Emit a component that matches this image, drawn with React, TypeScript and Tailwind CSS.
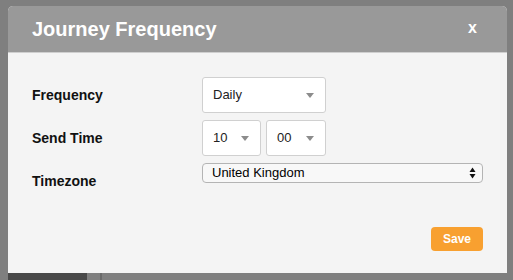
const Caret = () => (
  <span className="w-0 h-0 border-l-[4px] border-r-[4px] border-t-[5px] border-l-transparent border-r-transparent border-t-[#8c8c8c]" />
);

const DropDown = ({ value, width }: { value: string; width: string }) => (
  <div className={`${width} h-9 flex items-center justify-between pl-[10px] pr-[11px] bg-white border border-[#d0d0d0] rounded-[3px] text-[13px] text-[#222]`}>
    <span>{value}</span>
    <Caret />
  </div>
);

const App = () => {
  return (
    <div className="w-[513px] h-[280px] bg-[#7f7f7f] overflow-hidden flex flex-col pt-[6px] pl-[8px] font-['Liberation_Sans',Arial,sans-serif]">
      <div className="w-[499px] h-[267px] flex flex-col bg-[#f4f4f4] rounded-t-[5px] overflow-hidden">
        <div className="h-[47px] flex items-center justify-between pl-6 pr-[30px] bg-[#999999] border-b border-[#cfcfcf]">
          <h2 className="text-[20px] font-bold text-white">Journey Frequency</h2>
          <span className="text-[16px] font-bold text-white pb-[2px]">x</span>
        </div>

        <div className="flex-1 flex flex-col pt-6 pl-6 pr-6">
          <div className="grid grid-cols-[170px_1fr] gap-y-[7px] items-start">
            <div className="h-9 flex items-center text-[14px] font-bold text-[#111]">Frequency</div>
            <DropDown value="Daily" width="w-[124px]" />

            <div className="h-9 flex items-center text-[14px] font-bold text-[#111]">Send Time</div>
            <div className="flex gap-[5px]">
              <DropDown value="10" width="w-[59px]" />
              <DropDown value="00" width="w-[60px]" />
            </div>

            <div className="h-9 flex items-center text-[14px] font-bold text-[#111]">Timezone</div>
            <div className="h-5 flex items-center justify-between pl-[9px] pr-[6px] bg-[#f8f8f8] border border-[#b4b4b4] rounded-[4px] text-[13px] text-black">
              <span>United Kingdom</span>
              <svg width="7" height="12" viewBox="0 0 7 12">
                <path d="M3.5 0.5 L6.5 5 L0.5 5 Z" fill="#111" />
                <path d="M0.5 7 L6.5 7 L3.5 11.5 Z" fill="#111" />
              </svg>
            </div>
          </div>

          <div className="flex justify-end mt-7">
            <button className="w-[52px] h-6 rounded-[4px] bg-[#f8a030] text-white text-[12px] font-bold">Save</button>
          </div>
        </div>
      </div>
      <div className="flex h-[7px]">
        <div className="w-[79px] bg-[#494949]" />
        <div className="w-[13px]" />
        <div className="w-[2px] bg-[#6a6a6a]" />
      </div>
    </div>
  );
};

export default App;
